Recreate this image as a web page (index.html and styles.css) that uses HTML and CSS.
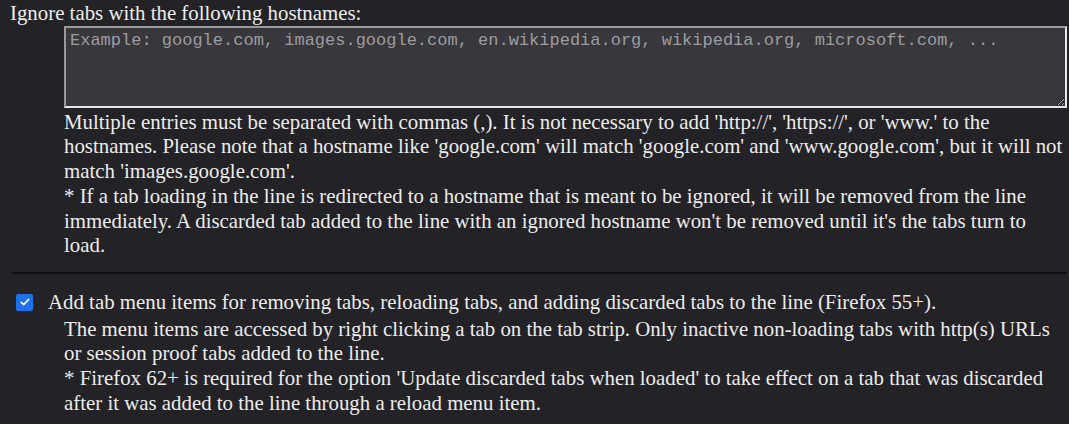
FILE: index.html
```html
<!DOCTYPE html>
<html lang="en">
<head>
  <meta charset="UTF-8">
  <title>Options</title>
  <link rel="stylesheet" href="styles.css">
</head>
<body>

  <section class="option">
    <label class="option-title" for="ignored-hosts">Ignore tabs with the following hostnames:</label>
    <div class="indent">
      <textarea id="ignored-hosts" class="hosts" placeholder="Example: google.com, images.google.com, en.wikipedia.org, wikipedia.org, microsoft.com, ..."></textarea>
      <p class="note">
        Multiple entries must be separated with commas (,). It is not necessary to add 'http://', 'https://', or 'www.' to the hostnames. Please note that a hostname like 'google.com' will match 'google.com' and 'www.google.com', but it will not match 'images.google.com'.<br>
        * If a tab loading in the line is redirected to a hostname that is meant to be ignored, it will be removed from the line immediately. A discarded tab added to the line with an ignored hostname won't be removed until it's the tabs turn to load.
      </p>
    </div>
  </section>

  <hr class="divider">

  <section class="option">
    <label class="check-row">
      <input type="checkbox" class="check" checked>
      <span class="box">
        <svg viewBox="0 0 16 16" width="12" height="12"><path d="M3 8.5l3.2 3L13 4.5" fill="none" stroke="#fff" stroke-width="2.2" stroke-linecap="round" stroke-linejoin="round"/></svg>
      </span>
      Add tab menu items for removing tabs, reloading tabs, and adding discarded tabs to the line (Firefox 55+).
    </label>
    <div class="indent">
      <p class="note">
        The menu items are accessed by right clicking a tab on the tab strip. Only inactive non-loading tabs with http(s) URLs or session proof tabs added to the line.<br>
        * Firefox 62+ is required for the option 'Update discarded tabs when loaded' to take effect on a tab that was discarded after it was added to the line through a reload menu item.
      </p>
    </div>
  </section>

</body>
</html>
```

FILE: styles.css
```css
body {
  margin: 0;
  padding: 0 2px 0 10px;
  background-color: #232226;
  color: #ececec;
  font-family: "Liberation Serif", "Times New Roman", serif;
  font-size: 20.85px;
  line-height: 24.7px;
  overflow: hidden;
}
.option {
  margin: 0;
}
.option-title {
  display: block;
  margin-top: 1px;
}
.indent {
  padding-left: 54px;
}
.hosts {
  display: block;
  box-sizing: border-box;
  width: 100%;
  height: 82px;
  margin: 0;
  padding: 3px 4px;
  background-color: #38373c;
  color: #ddd;
  border: 2px solid;
  border-color: #9a9a9a #e6e6e6 #e6e6e6 #9a9a9a;
  font-family: "Liberation Mono", "Courier New", monospace;
  font-size: 17px;
  line-height: 20px;
  resize: vertical;
}
.hosts::placeholder {
  color: #9c9ca0;
}
.note {
  margin: 2px 0 0;
}
.divider {
  margin: 14px 0 0 2px;
  border: none;
  border-top: 2px solid #111113;
  height: 0;
}
.check-row {
  display: flex;
  align-items: center;
  margin-top: 16px;
}
.check {
  display: none;
}
.box {
  display: flex;
  align-items: center;
  justify-content: center;
  width: 17px;
  height: 17px;
  margin: 0 15px 0 6px;
  background-color: #1c72e8;
  border-radius: 2px;
}
```
